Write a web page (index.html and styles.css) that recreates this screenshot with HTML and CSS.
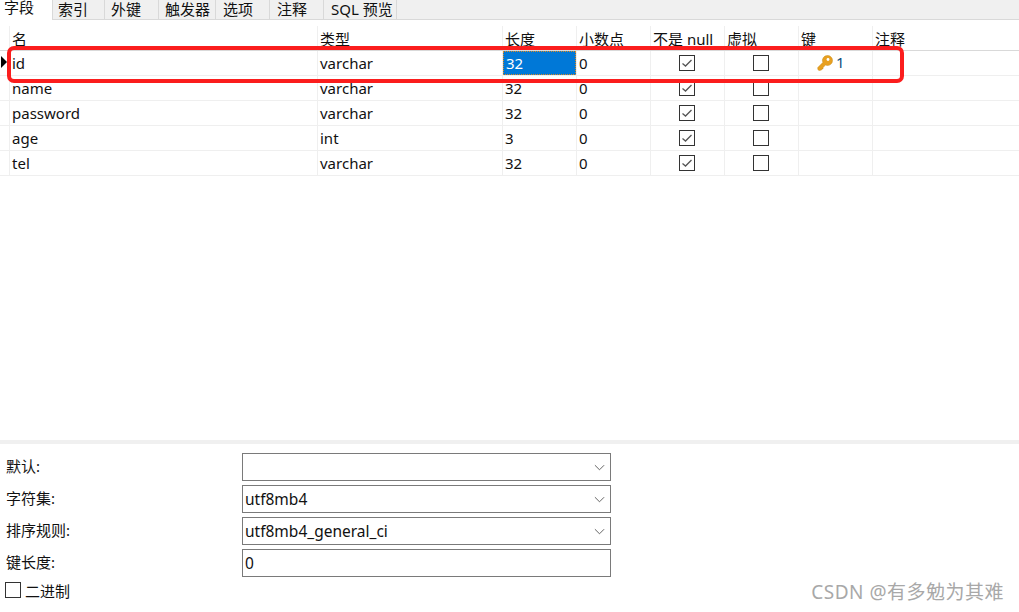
FILE: index.html
```html
<!DOCTYPE html>
<html lang="zh">
<head>
<meta charset="utf-8">
<title>字段</title>
<link rel="stylesheet" href="styles.css">
</head>
<body>
<div class="page">
  <nav class="tabs">
    <span class="tab active">字段</span>
    <span class="tab t2">索引</span>
    <span class="tab t3">外键</span>
    <span class="tab t4">触发器</span>
    <span class="tab t5">选项</span>
    <span class="tab t6">注释</span>
    <span class="tab t7">SQL 预览</span>
  </nav>
  <div class="grid-wrap">
    <div class="row head">
      <div class="gut"></div><div class="c">名</div><div class="c">类型</div><div class="c">长度</div><div class="c">小数点</div><div class="c">不是 null</div><div class="c">虚拟</div><div class="c">键</div><div class="c last">注释</div>
    </div>
    <div class="row">
      <div class="gut"><span class="arrow"></span></div><div class="c">id</div><div class="c">varchar</div><div class="c sel"><span class="seltext">32</span></div><div class="c">0</div>
      <div class="c chk"><svg class="box" viewBox="0 0 16 16"><rect x=".5" y=".5" width="15" height="15" /><path d="M3.5 8.5l3 2.5 6-6"/></svg></div>
      <div class="c chk"><svg class="box" viewBox="0 0 16 16"><rect x=".5" y=".5" width="15" height="15"/></svg></div>
      <div class="c keycell"><svg class="key" viewBox="0 0 16 16"><path class="keyfill" d="M10.5 0.5a5 5 0 0 1 0 10 5 5 0 0 1-2-.4L6 12.5v1.5H4.5v1L2 15.5 0.8 14.4V12.5l5-5a5 5 0 0 1 4.7-7z"/><circle cx="11" cy="4.5" r="1.4" fill="#fff"/></svg><span class="keynum">1</span></div>
      <div class="c last"></div>
    </div>
    <div class="row">
      <div class="gut"></div><div class="c">name</div><div class="c">varchar</div><div class="c">32</div><div class="c">0</div>
      <div class="c chk"><svg class="box" viewBox="0 0 16 16"><rect x=".5" y=".5" width="15" height="15"/><path d="M3.5 8.5l3 2.5 6-6"/></svg></div>
      <div class="c chk"><svg class="box" viewBox="0 0 16 16"><rect x=".5" y=".5" width="15" height="15"/></svg></div>
      <div class="c"></div><div class="c last"></div>
    </div>
    <div class="row">
      <div class="gut"></div><div class="c">password</div><div class="c">varchar</div><div class="c">32</div><div class="c">0</div>
      <div class="c chk"><svg class="box" viewBox="0 0 16 16"><rect x=".5" y=".5" width="15" height="15"/><path d="M3.5 8.5l3 2.5 6-6"/></svg></div>
      <div class="c chk"><svg class="box" viewBox="0 0 16 16"><rect x=".5" y=".5" width="15" height="15"/></svg></div>
      <div class="c"></div><div class="c last"></div>
    </div>
    <div class="row">
      <div class="gut"></div><div class="c">age</div><div class="c">int</div><div class="c">3</div><div class="c">0</div>
      <div class="c chk"><svg class="box" viewBox="0 0 16 16"><rect x=".5" y=".5" width="15" height="15"/><path d="M3.5 8.5l3 2.5 6-6"/></svg></div>
      <div class="c chk"><svg class="box" viewBox="0 0 16 16"><rect x=".5" y=".5" width="15" height="15"/></svg></div>
      <div class="c"></div><div class="c last"></div>
    </div>
    <div class="row">
      <div class="gut"></div><div class="c">tel</div><div class="c">varchar</div><div class="c">32</div><div class="c">0</div>
      <div class="c chk"><svg class="box" viewBox="0 0 16 16"><rect x=".5" y=".5" width="15" height="15"/><path d="M3.5 8.5l3 2.5 6-6"/></svg></div>
      <div class="c chk"><svg class="box" viewBox="0 0 16 16"><rect x=".5" y=".5" width="15" height="15"/></svg></div>
      <div class="c"></div><div class="c last"></div>
    </div>
    <div class="annot"></div>
  </div>
  <div class="spacer"></div>
  <section class="props">
    <div class="prop"><label class="lbl">默认:</label><div class="field"><span></span><svg class="chev" viewBox="0 0 12 7"><path d="M1 1l5 5 5-5"/></svg></div></div>
    <div class="prop"><label class="lbl">字符集:</label><div class="field"><span>utf8mb4</span><svg class="chev" viewBox="0 0 12 7"><path d="M1 1l5 5 5-5"/></svg></div></div>
    <div class="prop"><label class="lbl">排序规则:</label><div class="field"><span>utf8mb4_general_ci</span><svg class="chev" viewBox="0 0 12 7"><path d="M1 1l5 5 5-5"/></svg></div></div>
    <div class="prop"><label class="lbl">键长度:</label><div class="field"><span>0</span></div></div>
    <div class="binary"><svg class="box" viewBox="0 0 16 16"><rect x=".5" y=".5" width="15" height="15"/></svg><span>二进制</span></div>
  </section>
  <div class="mark">CSDN @有多勉为其难</div>
</div>
</body>
</html>
```

FILE: styles.css
```css
* { box-sizing: border-box; }
html, body { margin: 0; padding: 0; background: #fff; }
body { font-family: "Noto Sans", "Noto Sans CJK SC", sans-serif; font-size: 15px; color: #111; overflow: hidden; }
.page { position: relative; width: 1019px; height: 612px; display: flex; flex-direction: column; }

.tabs { display: flex; height: 20px; background: #f0f0f0; border-bottom: 1px solid #d9d9d9; flex: none; }
.tab { display: flex; align-items: center; height: 19px; padding-left: 6px; border-right: 1px solid #d9d9d9; font-size: 15px; line-height: 15px; white-space: nowrap; }
.active { background: #fff; width: 53px; height: 20px; padding-left: 4px; padding-bottom: 6px; }
.t2 { width: 52px; padding-left: 5px; }
.t3 { width: 54px; }
.t4 { width: 57px; }
.t5 { width: 54px; padding-left: 7px; }
.t6 { width: 54px; padding-left: 7px; }
.t7 { width: 73px; padding-left: 7px; }

.grid-wrap { position: relative; padding-top: 6px; flex: none; }
.row { display: grid; grid-template-columns: 10px 308px 185px 74px 74px 74px 74px 74px 1fr; height: 25px; border-bottom: 1px solid #efefef; }
.row.head { border-bottom: 1px solid #d9d9d9; }
.gut { border-right: 1px solid #efefef; position: relative; }
.c { border-right: 1px solid #efefef; padding-left: 2px; display: flex; align-items: center; font-size: 15px; line-height: 24px; white-space: nowrap; min-width: 0; }
.c.last { border-right: 0; }
.row.head .c { font-size: 15px; align-items: flex-end; line-height: 22px; }
.arrow { position: absolute; left: 1px; top: 5px; border-left: 6px solid #000; border-top: 6px solid transparent; border-bottom: 6px solid transparent; }
.sel { padding: 0; }
.seltext { display: block; width: 73px; height: 24px; line-height: 22px; padding-left: 2px; background: #0078d7; color: #fff; border: 1px dotted #e08a20; }
.chk { justify-content: center; padding: 0 1px 0 0; }
.box { width: 16px; height: 16px; flex: none; }
.box rect { fill: #fff; stroke: #333; stroke-width: 1; }
.box path { fill: none; stroke: #555; stroke-width: 1.3; }
.keycell { padding-left: 18px; align-items: flex-start; padding-top: 3px; }
.key { width: 16px; height: 16px; margin-top: 1px; flex: none; }
.keyfill { fill: #e8a020; stroke: #c98a16; stroke-width: .5; }
.keynum { font-size: 15px; line-height: 16px; margin-left: 3px; color: #0d4f7a; }

.annot { position: absolute; left: 7px; top: 26px; width: 897px; height: 37px; border: 4px solid #fb1d1d; border-radius: 7px; pointer-events: none; }

.spacer { height: 264px; flex: none; }
.props { flex: 1; border-top: 4px solid #f0f0f0; padding-top: 9px; padding-left: 6px; display: flex; flex-direction: column; gap: 4px; }
.prop { display: grid; grid-template-columns: 236px 369px; height: 28px; align-items: center; }
.lbl { font-size: 15px; line-height: 26px; padding-bottom: 2px; }
.field { height: 28px; border: 1px solid #7a7a7a; display: flex; align-items: center; justify-content: space-between; padding: 0 5px 0 2px; font-size: 15.5px; }
.chev { width: 11px; height: 7px; }
.chev path { fill: none; stroke: #555; stroke-width: 1; }
.binary { display: flex; align-items: center; gap: 4px; font-size: 15px; height: 20px; margin: -1px 0 0 -1px; }
.mark { position: absolute; right: 15px; top: 579px; font-size: 19px; line-height: 26px; letter-spacing: .5px; color: #a8a8a8; white-space: nowrap; }
```
